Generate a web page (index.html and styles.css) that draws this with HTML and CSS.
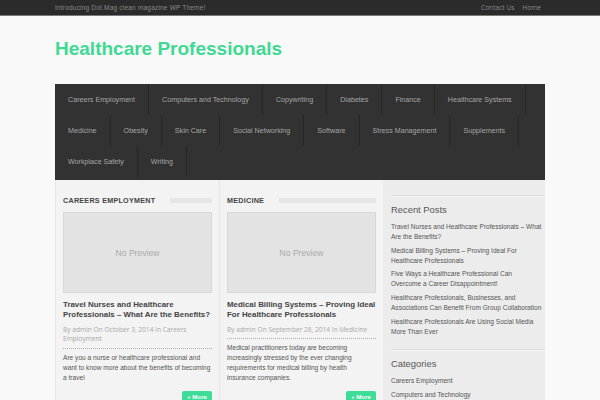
FILE: index.html
```html
<!DOCTYPE html>
<html>
<head>
<meta charset="utf-8">
<title>Healthcare Professionals</title>
<link rel="stylesheet" href="styles.css">
</head>
<body>
<div class="topbar">
  <div class="topbar-inner">
    <span class="intro">Introducing Dot.Mag clean magazine WP Theme!</span>
    <span class="toplinks"><a>Contact Us</a><a>Home</a></span>
  </div>
</div>
<div class="header">
  <h1 class="site-title">Healthcare Professionals</h1>
</div>
<nav class="nav">
  <a>Careers Employment</a>
  <a>Computers and Technology</a>
  <a>Copywriting</a>
  <a>Diabetes</a>
  <a>Finance</a>
  <a>Healthcare Systems</a>
  <a>Medicine</a>
  <a>Obesity</a>
  <a>Skin Care</a>
  <a>Social Networking</a>
  <a>Software</a>
  <a>Stress Management</a>
  <a>Supplements</a>
  <a>Workplace Safety</a>
  <a>Writing</a>
</nav>
<div class="main">
  <div class="col">
    <div class="col-head"><span class="col-title">Careers Employment</span><span class="col-bar"></span></div>
    <div class="thumb">No Preview</div>
    <h2 class="post-title">Travel Nurses and Healthcare Professionals – What Are the Benefits?</h2>
    <div class="meta">By admin On October 3, 2014 In Careers Employment</div>
    <p class="excerpt">Are you a nurse or healthcare professional and want to know more about the benefits of becoming a travel</p>
    <div class="more-row"><a class="more">+ More</a></div>
  </div>
  <div class="col">
    <div class="col-head"><span class="col-title">Medicine</span><span class="col-bar"></span></div>
    <div class="thumb">No Preview</div>
    <h2 class="post-title">Medical Billing Systems – Proving Ideal For Healthcare Professionals</h2>
    <div class="meta">By admin On September 28, 2014 In Medicine</div>
    <p class="excerpt">Medical practitioners today are becoming increasingly stressed by the ever changing requirements for medical billing by health insurance companies.</p>
    <div class="more-row"><a class="more">+ More</a></div>
  </div>
  <aside class="sidebar">
    <div class="widget">
      <h3 class="widget-title">Recent Posts</h3>
      <ul class="widget-list">
        <li>Travel Nurses and Healthcare Professionals – What Are the Benefits?</li>
        <li>Medical Billing Systems – Proving Ideal For Healthcare Professionals</li>
        <li>Five Ways a Healthcare Professional Can Overcome a Career Disappointment!</li>
        <li>Healthcare Professionals, Businesses, and Associations Can Benefit From Group Collaboration</li>
        <li>Healthcare Professionals Are Using Social Media More Than Ever</li>
      </ul>
    </div>
    <div class="widget">
      <h3 class="widget-title">Categories</h3>
      <ul class="widget-list cats">
        <li>Careers Employment</li>
        <li>Computers and Technology</li>
      </ul>
    </div>
  </aside>
</div>
</body>
</html>
```

FILE: styles.css
```css
html, body {
  margin: 0;
  padding: 0;
}
body {
  background: #f9f9f9;
  font-family: "Liberation Sans", Arial, sans-serif;
  color: #555;
  overflow: hidden;
  height: 400px;
}
.topbar {
  background: #2b2b2b;
  height: 15px;
  border-bottom: 1px solid #7a7a7a;
}
.topbar-inner {
  width: 490px;
  margin: 0 auto;
  height: 15px;
  display: flex;
  justify-content: space-between;
  align-items: center;
}
.intro {
  font-size: 6.5px;
  letter-spacing: 0.2px;
  color: #8a8a8a;
}
.toplinks {
  display: flex;
  gap: 8px;
  font-family: "Open Sans", sans-serif;
  font-size: 6.6px;
  color: #8a8a8a;
  padding-right: 4px;
}
.header {
  width: 490px;
  margin: 0 auto;
  height: 68px;
  overflow: hidden;
}
.site-title {
  margin: 22px 0 0;
  font-size: 19px;
  line-height: 22px;
  font-weight: bold;
  color: #3fd994;
}
.nav {
  width: 490px;
  margin: 0 auto;
  background: #323232;
  display: flex;
  flex-wrap: wrap;
  padding-bottom: 3px;
}
.nav a {
  display: block;
  height: 31px;
  line-height: 31px;
  padding: 1px 13px 0;
  font-size: 7.15px;
  color: #a6a6a6;
  border-right: 1px solid #262626;
  box-sizing: border-box;
  white-space: nowrap;
}
.main {
  width: 490px;
  margin: 0 auto;
  display: grid;
  grid-template-columns: 164px 164px 162px;
  align-items: start;
}
.col {
  background: #f3f3f3;
  border-left: 1px solid #e6e6e6;
  padding: 15px 7px 0 7px;
  height: 260px;
  box-sizing: border-box;
}
.col + .col {
  border-left: 1px solid #e4e4e4;
}
.col-head {
  display: flex;
  align-items: center;
  height: 10px;
}
.col-title {
  font-size: 7.2px;
  font-weight: bold;
  text-transform: uppercase;
  letter-spacing: 0.25px;
  color: #444;
}
.col-bar {
  flex: 1;
  height: 5px;
  background: #e6e6e6;
  margin-left: 15px;
}
.thumb {
  margin-top: 7px;
  height: 81px;
  box-sizing: border-box;
  background: #e3e3e3;
  border: 1px solid #d8d8d8;
  display: flex;
  align-items: center;
  justify-content: center;
  font-size: 8.6px;
  color: #aaa;
}
.post-title {
  margin: 7px -3px 0 0;
  font-size: 7.9px;
  line-height: 10px;
  font-weight: bold;
  color: #444;
}
.meta {
  margin-top: 5px;
  font-family: "Open Sans", sans-serif;
  font-size: 6.6px;
  line-height: 9.4px;
  color: #a8a8a8;
  padding-bottom: 4px;
  border-bottom: 1px dotted #aaa;
}
.excerpt {
  margin: 4px 0 0;
  font-size: 6.6px;
  line-height: 10px;
  color: #555;
}
.more-row {
  display: flex;
  justify-content: flex-end;
  margin-top: 8px;
}
.more {
  display: block;
  background: #3ddc97;
  color: #fff;
  font-size: 6.2px;
  font-weight: bold;
  line-height: 12px;
  padding: 0 5px;
  border-radius: 2px;
}
.sidebar {
  background: #ececec;
  padding: 15px 0 0 8px;
  height: 220px;
}
.widget {
  border-top: 1px solid #dedede;
  box-shadow: inset 0 1px 0 #f6f6f6;
  padding: 8px 2px 9px 0;
}
.widget-title {
  margin: 0;
  font-size: 9.4px;
  line-height: 12px;
  font-weight: normal;
  color: #555;
}
.widget-list {
  list-style: none;
  margin: 6px 0 0;
  padding: 0;
}
.widget-list li {
  font-size: 6.55px;
  line-height: 10px;
  color: #555;
  margin-bottom: 3.7px;
}
.widget-list.cats li {
  margin-bottom: 4px;
}
```
